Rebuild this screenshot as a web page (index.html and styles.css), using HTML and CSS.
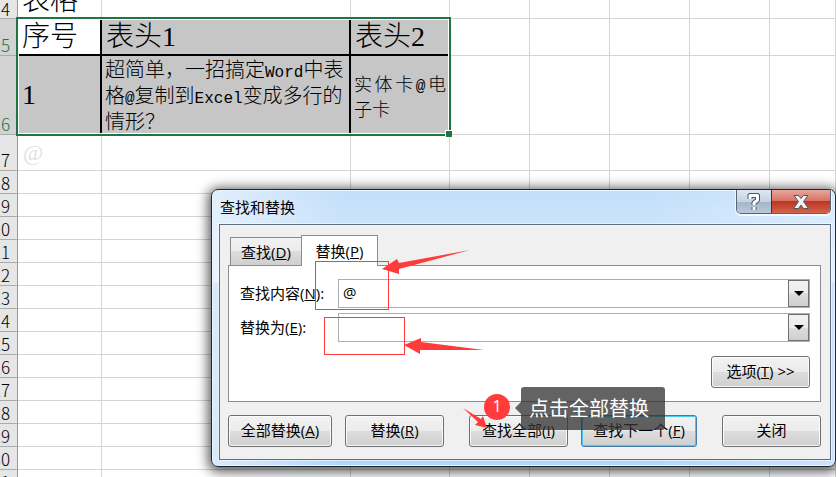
FILE: index.html
```html
<!DOCTYPE html>
<html lang="zh-CN">
<head>
    <meta charset="UTF-8">
    <meta name="viewport" content="width=device-width, initial-scale=1.0">
    <title>查找和替换</title>
    <link rel="stylesheet" href="styles.css">
</head>
<body>
    <div class="sheet">
        <table class="grid">
            <colgroup>
                <col class="col-head">
                <col class="col-a">
                <col class="col-b">
                <col class="col-c">
                <col class="col-std">
                <col class="col-std">
                <col class="col-std">
                <col class="col-std">
                <col>
            </colgroup>
            <tbody>
                <tr class="row-14"><th scope="row"><span>14</span></th><td class="big"><div class="cut">表格</div></td><td></td><td></td><td></td><td></td><td></td><td></td><td></td></tr>
                <tr class="row-15"><th scope="row" class="active"><span>15</span></th><td class="big framed current">序号</td><td class="big framed">表头1</td><td class="big framed last">表头2</td><td></td><td></td><td></td><td></td><td></td></tr>
                <tr class="row-16"><th scope="row" class="active"><span>16</span></th><td class="big framed bottom">1</td><td class="framed bottom note">超简单，一招搞定<span class="latin">Word</span>中表<br>格<span class="latin">@</span>复制到<span class="latin">Excel</span>变成多行的<br>情形？</td><td class="framed bottom last kind">实体卡<span class="latin">@</span>电子卡</td><td></td><td></td><td></td><td></td><td></td></tr>
                <tr class="row-17"><th scope="row"><span>17</span></th><td class="faint">@</td><td></td><td></td><td></td><td></td><td></td><td></td><td></td></tr>
                <tr><th scope="row"><span>18</span></th><td></td><td></td><td></td><td></td><td></td><td></td><td></td><td></td></tr>
                <tr><th scope="row"><span>19</span></th><td></td><td></td><td></td><td></td><td></td><td></td><td></td><td></td></tr>
                <tr><th scope="row"><span>20</span></th><td></td><td></td><td></td><td></td><td></td><td></td><td></td><td></td></tr>
                <tr><th scope="row"><span>21</span></th><td></td><td></td><td></td><td></td><td></td><td></td><td></td><td></td></tr>
                <tr><th scope="row"><span>22</span></th><td></td><td></td><td></td><td></td><td></td><td></td><td></td><td></td></tr>
                <tr><th scope="row"><span>23</span></th><td></td><td></td><td></td><td></td><td></td><td></td><td></td><td></td></tr>
                <tr><th scope="row"><span>24</span></th><td></td><td></td><td></td><td></td><td></td><td></td><td></td><td></td></tr>
                <tr><th scope="row"><span>25</span></th><td></td><td></td><td></td><td></td><td></td><td></td><td></td><td></td></tr>
                <tr><th scope="row"><span>26</span></th><td></td><td></td><td></td><td></td><td></td><td></td><td></td><td></td></tr>
                <tr><th scope="row"><span>27</span></th><td></td><td></td><td></td><td></td><td></td><td></td><td></td><td></td></tr>
                <tr><th scope="row"><span>28</span></th><td></td><td></td><td></td><td></td><td></td><td></td><td></td><td></td></tr>
                <tr><th scope="row"><span>29</span></th><td></td><td></td><td></td><td></td><td></td><td></td><td></td><td></td></tr>
                <tr><th scope="row"><span>30</span></th><td></td><td></td><td></td><td></td><td></td><td></td><td></td><td></td></tr>
                <tr><th scope="row"><span>31</span></th><td></td><td></td><td></td><td></td><td></td><td></td><td></td><td></td></tr>
            </tbody>
        </table>
        <div class="selection"></div>
    </div>

    <div class="dialog" role="dialog" aria-labelledby="dialogTitle">
        <div class="titlebar">
            <div class="title" id="dialogTitle">查找和替换</div>
            <div class="caption-buttons">
                <button type="button" class="help" aria-label="帮助">
                    <svg width="14" height="20" viewBox="0 0 14 20"><path class="halo" d="M3 7V3.500H10.500V8L7 11V13M7 15V18"/><path class="mark" d="M3 7V3.500H10.500V8L7 11V13M7 15V18"/></svg>
                </button>
                <button type="button" class="close" aria-label="关闭窗口">
                    <svg width="18" height="16" viewBox="0 0 18 16"><path class="cross" d="M2 1.500H6.500L9 4.500L11.500 1.500H16L11.500 7.500L16.500 14.500H11.500L9 11L6.500 14.500H1.500L6.500 7.500Z"/></svg>
                </button>
            </div>
        </div>
        <div class="client">
            <div class="tabs" role="tablist">
                <button type="button" class="tab" role="tab">查找(<u>D</u>)</button>
                <button type="button" class="tab selected" role="tab" aria-selected="true">替换(<u>P</u>)</button>
            </div>
            <div class="panel">
                <div class="field">
                    <label for="findText">查找内容(<u>N</u>):</label>
                    <div class="combo">
                        <input type="text" id="findText" value="@">
                        <button type="button" aria-label="查找记录"><svg width="10" height="5" viewBox="0 0 10 5"><path d="M0 0H10L5 5Z"/></svg></button>
                    </div>
                </div>
                <div class="field">
                    <label for="replaceText">替换为(<u>E</u>):</label>
                    <div class="combo">
                        <input type="text" id="replaceText">
                        <button type="button" aria-label="替换记录"><svg width="10" height="5" viewBox="0 0 10 5"><path d="M0 0H10L5 5Z"/></svg></button>
                    </div>
                </div>
                <button type="button" class="btn options">选项(<u>T</u>) &gt;&gt;</button>
            </div>
            <div class="actions">
                <button type="button" class="btn wide">全部替换(<u>A</u>)</button>
                <button type="button" class="btn">替换(<u>R</u>)</button>
                <button type="button" class="btn group">查找全部(<u>I</u>)</button>
                <button type="button" class="btn next">查找下一个(<u>F</u>)</button>
                <button type="button" class="btn end">关闭</button>
            </div>
        </div>
    </div>

    <!-- annotations drawn over the dialog -->
    <svg class="marks" width="836" height="477" viewBox="0 0 836 477">
        <rect x="315.500" y="261.500" width="73" height="48"/>
        <rect x="324.500" y="317.500" width="80" height="37"/>
        <path d="M382 269L397 259L399 263L470 250L399 269L399 274Z"/>
        <path d="M404 345L421 338V342L484 350L420 350V354Z"/>
        <path d="M463 408L481 419L483 416L487 428L475 425L478 422Z"/>
    </svg>
    <div class="step">1</div>
    <div class="tip">点击全部替换</div>
</body>
</html>
```

FILE: styles.css
```css
* {
    box-sizing: border-box;
}
body {
    margin: 0;
    height: 100vh;
    position: relative;
    overflow: hidden;
    background-color: #fff;
    color: #000;
    font-family: "Open Sans", "Noto Sans CJK SC", sans-serif;
    font-size: 15px;
}
button, input {
    font: inherit;
    color: inherit;
    margin: 0;
    padding: 0;
}

/* worksheet */
.sheet {
    position: relative;
}
.grid {
    width: 100%;
    table-layout: fixed;
    border-collapse: separate;
    border-spacing: 0;
}
.col-head { width: 18px; }
.col-a { width: 84px; }
.col-b { width: 249px; }
.col-c { width: 99px; }
.col-std { width: 80px; }
.grid tr {
    height: 23px;
}
.grid th, .grid td {
    padding: 0;
    border-right: 1px solid #d4d4d4;
    border-bottom: 1px solid #d4d4d4;
}
.grid th {
    background-color: #e6e6e6;
    border-right-color: #999;
    border-bottom-color: #ababab;
    font: 17px "Noto Sans CJK SC", sans-serif;
    font-weight: 300;
    line-height: 20px;
    vertical-align: bottom;
    overflow: hidden;
}
.grid th span {
    display: flex;
    justify-content: flex-end;
    padding-right: 7px;
}
.grid th.active {
    background-color: #d2d2d2;
    color: #217346;
}
.grid .row-14 { height: 19px; }
.grid .row-15 { height: 37px; }
.grid .row-16 { height: 79px; }
.grid .row-17 { height: 36px; }
.grid .row-14 th {
    line-height: 18px;
}
.grid .big {
    padding-left: 4px;
    font: 28px "Liberation Serif", "Noto Sans CJK SC", serif;
    font-weight: 300;
    line-height: 34px;
    white-space: nowrap;
}
.cut {
    height: 18px;
    overflow: hidden;
    display: flex;
    align-items: flex-end;
}
.grid .framed {
    background-color: #c6c6c6;
    border-right: 2px solid #000;
    border-bottom: 2px solid #000;
}
.grid .current {
    background-color: #fff;
}
.grid .last {
    border-right: 1px solid #c6c6c6;
}
.grid .bottom {
    border-bottom: 1px solid #c6c6c6;
}
.grid .note {
    padding-left: 3px;
    font: 20px "Noto Sans CJK SC", sans-serif;
    font-weight: 300;
    line-height: 26px;
    white-space: nowrap;
}
.note .latin {
    font: 16px "Liberation Mono", monospace;
}
.grid .kind {
    padding: 0 3px;
    font: 18px "Noto Sans CJK SC", sans-serif;
    font-weight: 300;
    line-height: 24px;
    text-align: justify;
}
.kind .latin {
    font: 16px "Liberation Mono", monospace;
}
.grid .faint {
    padding-left: 5px;
    font: 22px "Liberation Serif", serif;
    line-height: 24px;
    color: #e0e0e0;
}
.selection {
    position: absolute;
    left: 16px;
    top: 17px;
    width: 435px;
    height: 119px;
    border: 2px solid #217346;
    box-shadow: inset 0 0 0 1px #fff;
}
.selection::after {
    content: "";
    position: absolute;
    right: -3px;
    bottom: -3px;
    width: 6px;
    height: 6px;
    background-color: #217346;
    border-top: 1px solid #fff;
    border-left: 1px solid #fff;
}

/* dialog window */
.dialog {
    position: absolute;
    left: 211px;
    right: 0;
    top: 189px;
    padding: 0 4px 6px 7px;
    border: 1px solid #20262e;
    border-radius: 7px;
    background: linear-gradient(to bottom, rgba(255, 255, 255, 0.2), rgba(255, 255, 255, 0.5) 92px, rgba(255, 255, 255, 0) 93px), linear-gradient(to right, #d8eafc, #b4d7f9 130px, #b4d7f9 70%, #cbe3fb);
    box-shadow: inset 0 0 0 1px #e8f4ff, 0 2px 12px 3px rgba(0, 0, 0, 0.65);
}
.titlebar {
    height: 34px;
    display: flex;
    justify-content: space-between;
    align-items: flex-start;
}
.title {
    padding-left: 1px;
    line-height: 34px;
}
.caption-buttons {
    display: flex;
    border: 1px solid #5a6475;
    border-top: none;
    border-radius: 0 0 5px 5px;
    overflow: hidden;
    box-shadow: 0 1px 0 1px rgba(255, 255, 255, 0.7);
}
.caption-buttons button {
    height: 23px;
    border: none;
    display: flex;
    align-items: center;
    justify-content: center;
}
.help {
    width: 34px;
    background: linear-gradient(to bottom, #dfe8f2, #c4d2e1 50%, #a2b5ca 50%, #b7c9dc);
}
.caption-buttons .close {
    width: 59px;
    border-left: 1px solid #5d2623;
    background: linear-gradient(to bottom, #e8a79b, #d77263 48%, #bd3622 50%, #d3634c);
}
.halo, .mark {
    fill: none;
    stroke-linejoin: round;
}
.halo {
    stroke: #4f5566;
    stroke-width: 5;
}
.mark {
    stroke: #fff;
    stroke-width: 3;
}
.cross {
    fill: #f4f4f4;
    stroke: #4f5566;
    stroke-width: 1;
}
.client {
    border: 1px solid #5f6f83;
    background-color: #f0f0f0;
    box-shadow: 0 0 0 1px rgba(255, 255, 255, 0.5);
    padding: 10px 9px 12px 8px;
}
.tabs {
    display: flex;
    align-items: flex-end;
    padding-left: 2px;
}
.tab {
    width: 71px;
    height: 28px;
    border: 1px solid #898c95;
    border-right: none;
    border-bottom: none;
    background: linear-gradient(to bottom, #f2f2f2, #ebebeb 50%, #dddddd 50%, #cfcfcf);
}
.tab.selected {
    width: 77px;
    height: 31px;
    margin-bottom: -1px;
    padding-bottom: 2px;
    border-right: 1px solid #898c95;
    background: #fff;
    position: relative;
}
.panel {
    border: 1px solid #898c95;
    background-color: #fff;
    padding: 13px 10px;
    display: flex;
    flex-direction: column;
    gap: 5px;
}
.field {
    display: flex;
    align-items: center;
    padding-left: 1px;
}
.field label {
    width: 98px;
    padding-bottom: 2px;
}
.combo {
    flex: 1;
    display: flex;
    height: 29px;
    border: 1px solid #abadb3;
    background-color: #fff;
}
.combo input {
    flex: 1;
    min-width: 0;
    border: none;
    outline: none;
    background: none;
    padding: 0 4px 4px;
}
.combo button {
    width: 21px;
    border: 1px solid #707070;
    background: linear-gradient(to bottom, #f2f2f2, #ebebeb 50%, #dddddd 50%, #cfcfcf);
    display: flex;
    align-items: center;
    justify-content: center;
}
.btn {
    width: 99px;
    height: 32px;
    padding-bottom: 3px;
    border: 1px solid #707070;
    border-radius: 3px;
    background: linear-gradient(to bottom, #f2f2f2, #ebebeb 50%, #dddddd 50%, #cfcfcf);
    box-shadow: inset 0 0 0 1px rgba(255, 255, 255, 0.8);
    white-space: nowrap;
}
.options {
    align-self: flex-end;
    margin-top: 9px;
}
.actions {
    display: flex;
    padding-top: 13px;
    gap: 13px;
}
.wide { width: 104px; }
.group { margin-left: 12px; }
.next {
    width: 116px;
    border-color: #3c7fb1;
    box-shadow: inset 0 0 0 1px #48cbf2;
}
.end { margin-left: auto; }

/* annotations */
.marks {
    position: absolute;
    left: 0;
    top: 0;
    pointer-events: none;
}
.marks rect {
    fill: none;
    stroke: #ff3b3b;
}
.marks path {
    fill: #ff3b3b;
}
.step {
    position: absolute;
    left: 484px;
    top: 394px;
    width: 26px;
    height: 26px;
    border-radius: 50%;
    background-color: #ff3b3b;
    color: #fff;
    font-size: 16px;
    line-height: 25px;
    text-align: center;
}
.tip {
    position: absolute;
    left: 521px;
    top: 387px;
    padding: 0 16px 0 8px;
    border-radius: 3px;
    background-color: rgba(50, 50, 50, 0.76);
    color: #fff;
    font-size: 20px;
    line-height: 43px;
}
.tip::before {
    content: "";
    position: absolute;
    left: -6px;
    top: 15px;
    border: 6px solid transparent;
    border-left: none;
    border-right-color: rgba(50, 50, 50, 0.76);
}
```
